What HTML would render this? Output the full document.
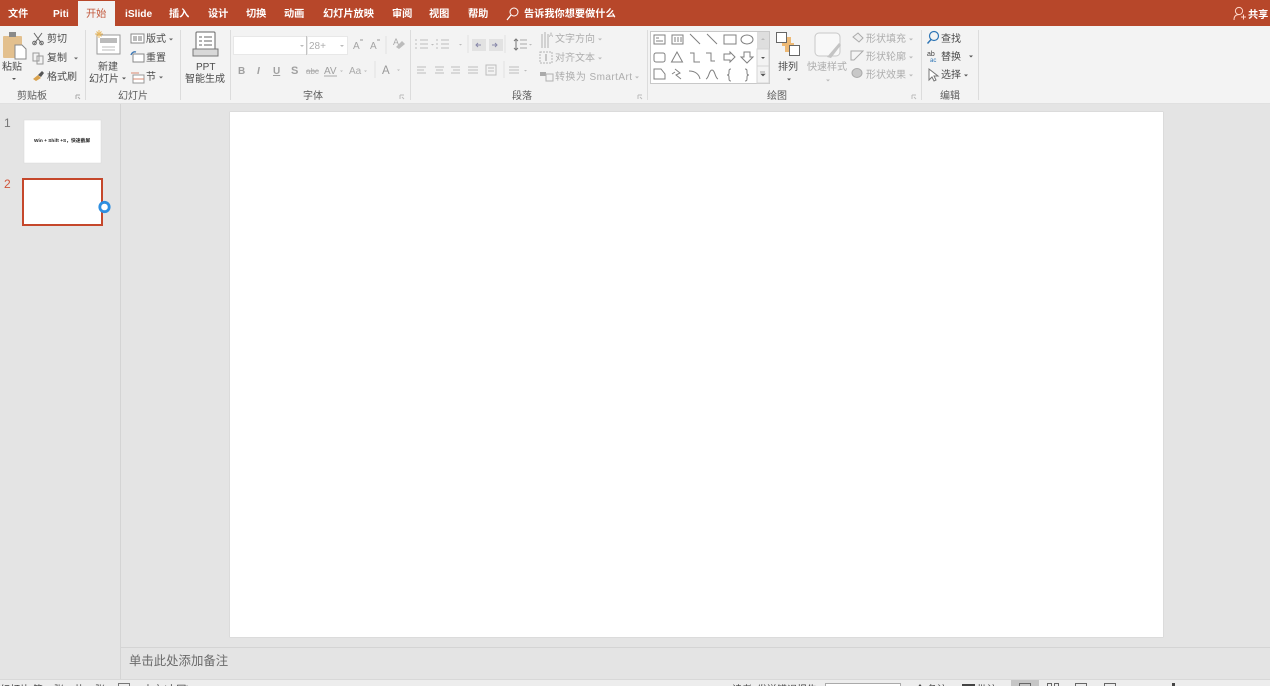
<!DOCTYPE html>
<html lang="zh-CN">
<head>
<meta charset="utf-8">
<title>PowerPoint</title>
<style>
html,body{margin:0;padding:0;width:1270px;height:686px;overflow:hidden;background:#e4e4e4}
svg{display:block;position:absolute;left:0;top:0;filter:blur(.35px)}
text{font-family:"Liberation Sans","Noto Sans CJK SC",sans-serif;font-size:10px}
.t{fill:#fff;font-size:10.2px;font-weight:700}
.k{fill:#4c4c4c}
.g{fill:#adadad}
.l{fill:#5c5c5c}
.i{fill:none;stroke:#808080;stroke-width:1}
.d{fill:none;stroke:#bcbcbc;stroke-width:1}
.s{fill:#fff;stroke:#8a8a8a;stroke-width:1}
</style>
</head>
<body>
<svg width="1270" height="686" viewBox="0 0 1270 686" xmlns="http://www.w3.org/2000/svg">
<!-- base -->
<rect width="1270" height="686" fill="#e4e4e4"/>
<rect width="1270" height="26.5" fill="#b7472a"/>
<rect y="26" width="1270" height="77" fill="#f3f3f3"/>
<rect y="103" width="1270" height="1" fill="#e0e0e0"/>
<rect x="78" y="1" width="37" height="26" fill="#f3f3f3"/>

<!-- tabs -->
<text class="t" x="8" y="17">文件</text>
<text class="t" x="53" y="17">Piti</text>
<text x="86" y="17" style="fill:#c2583c;font-size:10.2px">开始</text>
<text class="t" x="125" y="17">iSlide</text>
<text class="t" x="169" y="17">插入</text>
<text class="t" x="208" y="17">设计</text>
<text class="t" x="246" y="17">切换</text>
<text class="t" x="284" y="17">动画</text>
<text class="t" x="323" y="17">幻灯片放映</text>
<text class="t" x="392" y="17">审阅</text>
<text class="t" x="429" y="17">视图</text>
<text class="t" x="468" y="17">帮助</text>
<circle cx="514" cy="12" r="4" fill="none" stroke="#fff"/>
<path d="M511 15L507 20" stroke="#fff" stroke-width="1.2"/>
<text class="t" x="524" y="17">告诉我你想要做什么</text>
<circle cx="1239" cy="11" r="3.6" fill="none" stroke="#ffd9cc"/>
<path d="M1234 20c0-4 2-5.500 5-5.500M1241 17h5M1243.500 14.500v5" fill="none" stroke="#ffd9cc"/>
<text class="t" x="1248" y="18">共享</text>

<!-- group separators -->
<g fill="#dcdcdc">
<rect x="85" y="30" width="1" height="70"/>
<rect x="180" y="30" width="1" height="70"/>
<rect x="230" y="30" width="1" height="70"/>
<rect x="410" y="30" width="1" height="70"/>
<rect x="647" y="30" width="1" height="70"/>
<rect x="921" y="30" width="1" height="70"/>
<rect x="978" y="30" width="1" height="70"/>
</g>

<!-- clipboard -->
<rect x="3" y="36" width="19" height="22" rx="1" fill="#e3c08e"/>
<rect x="9" y="32" width="7" height="5" fill="#8a8a8a"/>
<path d="M15 45h7l4 4v10H15z" fill="#fff" stroke="#888"/>
<text class="k" x="2" y="70">粘贴</text>
<path d="M12 78h4l-2 2z" fill="#555"/>
<path d="M34 33l8 11M42 33l-8 11" stroke="#666" fill="none"/>
<circle cx="34.500" cy="43" r="1.800" fill="none" stroke="#666"/>
<circle cx="41.500" cy="43" r="1.800" fill="none" stroke="#666"/>
<text class="k" x="47" y="42">剪切</text>
<path d="M33 53h6v8h-6zM37 56h6v8h-6z" fill="#f3f3f3" stroke="#999"/>
<text class="k" x="47" y="61">复制</text>
<path d="M74 57.500h4l-2 2z" fill="#666"/>
<path d="M33 79l5-4 3 3-5 3z" fill="#d9a24e"/>
<path d="M38 75l4-4 2 2-3 4z" fill="#555"/>
<text class="k" x="47" y="80">格式刷</text>
<text class="l" x="17" y="99">剪贴板</text>
<path d="M76 95h4M76 95v4M78 97l2 2" stroke="#aaa" fill="none"/>

<!-- slides group -->
<rect x="97" y="35" width="23" height="19" fill="#fff" stroke="#9a9a9a"/>
<rect x="100" y="38" width="17" height="5" fill="#bbb"/>
<path d="M102 47h13M102 50h13" stroke="#bbb"/>
<path d="M99 30v8M95 34h8M96.500 31.500l5 5M101.500 31.500l-5 5" stroke="#e8b860"/>
<text class="k" x="98" y="70">新建</text>
<text class="k" x="89" y="82">幻灯片</text>
<path d="M122 77.500h4l-2 2z" fill="#555"/>
<rect x="131" y="34" width="13" height="9" fill="#fff" stroke="#888"/>
<rect x="133" y="36" width="4" height="5" fill="#bbb"/><rect x="138" y="36" width="4" height="5" fill="#bbb"/>
<text class="k" x="146" y="42">版式</text>
<path d="M169 38.500h4l-2 2z" fill="#666"/>
<rect x="133" y="54" width="11" height="8" fill="#fff" stroke="#888"/>
<path d="M131 55a4 4 0 0 1 5-3" fill="none" stroke="#3f79b5" stroke-width="1.400"/>
<text class="k" x="146" y="61">重置</text>
<rect x="133" y="75" width="11" height="8" fill="#fff" stroke="#999"/>
<path d="M131 73h8M133 79h11" stroke="#d98a70"/>
<text class="k" x="146" y="80">节</text>
<path d="M159 76.500h4l-2 2z" fill="#666"/>
<text class="l" x="118" y="99">幻灯片</text>

<!-- PPT -->
<rect x="196" y="32" width="19" height="20" rx="1" fill="#fff" stroke="#666"/>
<path d="M199 37h3M204 37h8M199 41h3M204 41h8M199 45h3M204 45h8" stroke="#666"/>
<path d="M193 49h25v7h-25z" fill="#d8d8d8" stroke="#777"/>
<text class="k" x="196" y="70">PPT</text>
<text class="k" x="185" y="82">智能生成</text>

<!-- font group -->
<rect x="233.500" y="36.500" width="73" height="18" fill="#fff" stroke="#e8e8e8"/>
<rect x="307.500" y="36.500" width="40" height="18" fill="#fff" stroke="#e8e8e8"/>
<path d="M306.500 36v19" stroke="#c4c4c4"/>
<path d="M300 45h4l-2 2zM340 45h4l-2 2z" fill="#bbb"/>
<text class="g" x="309" y="49">28+</text>
<text x="353" y="49" style="fill:#a4a4a4;font-size:10px">A</text>
<text x="370" y="49" style="fill:#a4a4a4;font-size:10px">A</text>
<path d="M360 40h3M377 40h3" stroke="#999"/>
<path d="M386 36v18" stroke="#e2e2e2"/>
<text x="393" y="45" style="fill:#aaa;font-size:9px">A</text>
<path d="M396 47l6-6 3 3-6 5z" fill="#bcbcbc"/>
<g style="fill:#a0a0a0;font-weight:700">
<text x="238" y="74" style="font-size:10px">B</text>
<text x="257" y="74" style="font-size:10px;font-style:italic">I</text>
<text x="273" y="74" style="font-size:10px;text-decoration:underline">U</text>
<text x="291" y="74" style="font-size:11px">S</text>
</g>
<text x="306" y="74" style="fill:#aaa;font-size:8px">abc</text>
<path d="M306 71h13" stroke="#aaa"/>
<text x="324" y="74" style="fill:#a0a0a0;font-size:10px">AV</text>
<path d="M324 76h13" stroke="#aaa"/>
<path d="M340 70.500h3l-1.500 1.500z" fill="#bbb"/>
<text x="349" y="74" style="fill:#aaa;font-size:10px">Aa</text>
<path d="M364 70.500h3l-1.500 1.500z" fill="#bbb"/>
<path d="M375 61v17" stroke="#e2e2e2"/>
<text x="382" y="74" style="fill:#999;font-size:11.500px">A</text>
<path d="M397 69.500h3l-1.500 1.500z" fill="#bbb"/>
<text class="l" x="303" y="99">字体</text>
<path d="M400 95h4M400 95v4M402 97l2 2" stroke="#bbb" fill="none"/>

<!-- paragraph group -->
<g class="d">
<path d="M420 40h8M420 44h8M420 48h8M441 40h8M441 44h8M441 48h8"/>
<path d="M415 40h2M415 44h2M415 48h2M436 40h2M436 44h2M436 48h2"/>
</g>
<path d="M468 35v18M505 35v18" stroke="#e0e0e0"/>
<path d="M431 44h3l-1.500 1.500zM459 44h3l-1.500 1.500zM529 44h3l-1.500 1.500z" fill="#bbb"/>
<rect x="472" y="39" width="14" height="12" fill="#e2e2e2"/>
<rect x="489" y="39" width="14" height="12" fill="#e2e2e2"/>
<path d="M481 45h-5m2-2l-2 2 2 2M492 45h5m-2-2l2 2-2 2" fill="none" stroke="#88a"/>
<path d="M516 39v11M514 41l2-2 2 2M514 48l2 2 2-2" fill="none" stroke="#777"/>
<path d="M520 40h7M520 44h7M520 48h7" stroke="#aaa"/>
<g class="d">
<path d="M417 67h9M417 70h7M417 73h9M435 67h9M436 70h7M435 73h9M451 67h9M453 70h7M451 73h9M468 67h10M468 70h10M468 73h10"/>
<rect x="486" y="65" width="10" height="10"/>
<path d="M488 68h6M488 71h6"/>
<path d="M509 67h10M509 70h10M509 73h10"/>
</g>
<path d="M504 61v17" stroke="#e0e0e0"/>
<path d="M524 70h3l-1.500 1.500z" fill="#bbb"/>
<path d="M542 34v14M545 32v16M548 34v14" stroke="#b0b0b0"/>
<text x="549" y="37" style="fill:#aaa;font-size:6px">A</text>
<text class="g" x="555" y="42">文字方向</text>
<path d="M598 38.500h4l-2 2z" fill="#bbb"/>
<rect x="540" y="52" width="12" height="11" fill="none" stroke="#b4b4b4" stroke-dasharray="2 1"/>
<path d="M546 54v7" stroke="#999"/>
<text class="g" x="555" y="61">对齐文本</text>
<path d="M598 57.500h4l-2 2z" fill="#bbb"/>
<rect x="540" y="72" width="6" height="4" fill="#aaa"/>
<rect x="546" y="74" width="7" height="7" fill="none" stroke="#b0b0b0"/>
<text class="g" x="555" y="80" textLength="77">转换为 SmartArt</text>
<path d="M635 76.500h4l-2 2z" fill="#bbb"/>
<text class="l" x="512" y="99">段落</text>
<path d="M638 95h4M638 95v4M640 97l2 2" stroke="#bbb" fill="none"/>

<!-- shape gallery -->
<rect x="650.500" y="31.500" width="119" height="52" fill="#fff" stroke="#c8c8c8"/>
<rect x="757" y="32" width="12" height="17" fill="#dedede"/>
<rect x="757" y="49" width="12" height="17" fill="#f3f3f3" stroke="#d4d4d4"/>
<rect x="757" y="66" width="12" height="17" fill="#f3f3f3" stroke="#d4d4d4"/>
<path d="M761 40h4l-2-2z" fill="#bbb"/>
<path d="M761 57h4l-2 2z" fill="#555"/>
<path d="M760 72h5M761 74h4l-2 2z" stroke="#555" stroke-width=".6" fill="#555"/>
<g class="i">
<rect x="654" y="35" width="11" height="9"/>
<path d="M656 38h3M656 41h7"/>
<rect x="672" y="35" width="11" height="9"/>
<path d="M675 37v5M678 37v5M681 37v5"/>
<path d="M690 34l10 10M707 34l10 10"/>
<rect x="724" y="35" width="12" height="9"/>
<ellipse cx="747" cy="39.500" rx="6" ry="4.500"/>
<rect x="654" y="53" width="11" height="9" rx="2"/>
<path d="M677 52l-5.500 10h11z"/>
<path d="M690 53h4v9h6M706 53h5v8h4"/>
<path d="M724 54h6v-2l5 5-5 5v-2h-6z"/>
<path d="M744 52h6v5h3l-6 6-6-6h3z"/>
<path d="M654 69h7l4 5v5h-11z"/>
<path d="M675 69l5 4-4 2 5 4M672 74l3-2"/>
<path d="M689 71c6 0 10 3 11 8M706 79c3-1 3-9 6-9s3 8 6 9"/>
<path d="M731 69c-2 0-2 1-2 3s0 3-2 3c2 0 2 1 2 3s0 3 2 3"/>
<path d="M745 69c2 0 2 1 2 3s0 3 2 3c-2 0-2 1-2 3s0 3-2 3"/>
</g>

<!-- arrange -->
<rect x="782" y="37" width="9" height="9" fill="#eeb974"/>
<rect x="785" y="43" width="9" height="9" fill="#eeb974"/>
<rect x="776.500" y="32.500" width="10" height="10" fill="#fff" stroke="#666"/>
<rect x="789.500" y="45.500" width="10" height="10" fill="#fff" stroke="#666"/>
<text class="k" x="778" y="70">排列</text>
<path d="M787 78.500h4l-2 2z" fill="#555"/>
<rect x="815" y="33" width="25" height="23" rx="4" fill="#f8f8f8" stroke="#c8c8c8"/>
<path d="M827 57l12-14 2 2-10 13z" fill="#c4c4c4"/>
<text class="g" x="807" y="70">快速样式</text>
<path d="M826 79.500h4l-2 2z" fill="#bbb"/>
<path d="M853 37l5-4 5 5-4 4z" fill="#eee" stroke="#aaa"/>
<text class="g" x="866" y="42">形状填充</text>
<path d="M909 38.500h4l-2 2z" fill="#bbb"/>
<path d="M851 51h12l-1 1-8 8-3 0z" fill="#f4f4f4" stroke="#aaa"/>
<text class="g" x="866" y="60">形状轮廓</text>
<path d="M909 56.500h4l-2 2z" fill="#bbb"/>
<ellipse cx="857" cy="73" rx="5" ry="4.500" fill="#c8c8c8" stroke="#aaa"/>
<text class="g" x="866" y="78">形状效果</text>
<path d="M909 74.500h4l-2 2z" fill="#bbb"/>
<text class="l" x="767" y="99">绘图</text>
<path d="M912 95h4M912 95v4M914 97l2 2" stroke="#bbb" fill="none"/>

<!-- editing -->
<circle cx="934" cy="36" r="4.500" fill="none" stroke="#2e75b5" stroke-width="1.200"/>
<path d="M931 39.500l-3.500 4" stroke="#2e75b5" stroke-width="1.400"/>
<text class="k" x="941" y="42">查找</text>
<text x="927" y="56" style="fill:#444;font-size:7px">ab</text>
<text x="930" y="62" style="fill:#2e75b5;font-size:6px">ac</text>
<text class="k" x="941" y="60">替换</text>
<path d="M969 55.500h4l-2 2z" fill="#555"/>
<path d="M929 69v11l3-3 2 4 2-1-2-4h4z" fill="#fff" stroke="#777"/>
<text class="k" x="941" y="78">选择</text>
<path d="M964 74.500h4l-2 2z" fill="#555"/>
<text class="l" x="940" y="99">编辑</text>

<!-- left panel -->
<rect x="120" y="104" width="1" height="576" fill="#d4d4d4"/>
<text x="4" y="127" style="fill:#777;font-size:12px">1</text>
<rect x="24" y="120" width="77" height="43" fill="#fff" stroke="#d8d8d8" stroke-width=".5"/>
<text x="34" y="142" style="fill:#222;font-size:4.800px;font-weight:700">Win + Shift +S，快速截屏</text>
<text x="4" y="188" style="fill:#d0553a;font-size:12px">2</text>
<rect x="23" y="179" width="79" height="46" fill="#fff" stroke="#c5472b" stroke-width="2"/>
<circle cx="104.500" cy="207" r="4.700" fill="#fff" stroke="#2f8fe0" stroke-width="2.800"/>

<!-- slide -->
<rect x="229.500" y="111.500" width="934" height="526" fill="#d2d2d2"/>
<rect x="230" y="112" width="933" height="525" fill="#fff"/>

<!-- notes -->
<rect x="121" y="647" width="1149" height="1" fill="#d4d4d4"/>
<text x="129" y="665" style="fill:#6a6a6a;font-size:12.400px">单击此处添加备注</text>

<!-- status bar -->
<rect y="679" width="1270" height="1" fill="#d8d8d8"/>
<rect y="680" width="1270" height="6" fill="#ededed"/>
<text x="0" y="693" style="fill:#444;font-size:10px">幻灯片 第 2 张，共 2 张</text>
<rect x="118.500" y="683.500" width="11" height="8" fill="none" stroke="#777"/>
<text x="143" y="693" style="fill:#444;font-size:10px">中文(中国)</text>
<text x="732" y="693" style="fill:#444;font-size:10px">读者</text>
<text x="757" y="693" style="fill:#444;font-size:10px">发送错误报告</text>
<rect x="825.500" y="683.500" width="75" height="10" fill="#fff" stroke="#aaa"/>
<path d="M920 684l-3 4h6z" fill="#444"/>
<text x="927" y="693" style="fill:#444;font-size:10px">备注</text>
<rect x="962" y="684" width="13" height="8" fill="#444"/>
<text x="977" y="693" style="fill:#444;font-size:10px">批注</text>
<rect x="1011" y="680" width="28" height="6" fill="#c6c6c6"/>
<path d="M1019.500 687v-3.500h11v3.500M1047.500 687v-3.500h4v3.500M1054.500 687v-3.500h4v3.500M1075.500 687v-3.500h11v3.500M1104.500 687v-3.500h11v3.500" fill="none" stroke="#666"/>
<rect x="1172" y="683" width="3" height="3" fill="#444"/>
<text x="1240" y="693" style="fill:#444;font-size:10px">85%</text>
</svg>
</body>
</html>
